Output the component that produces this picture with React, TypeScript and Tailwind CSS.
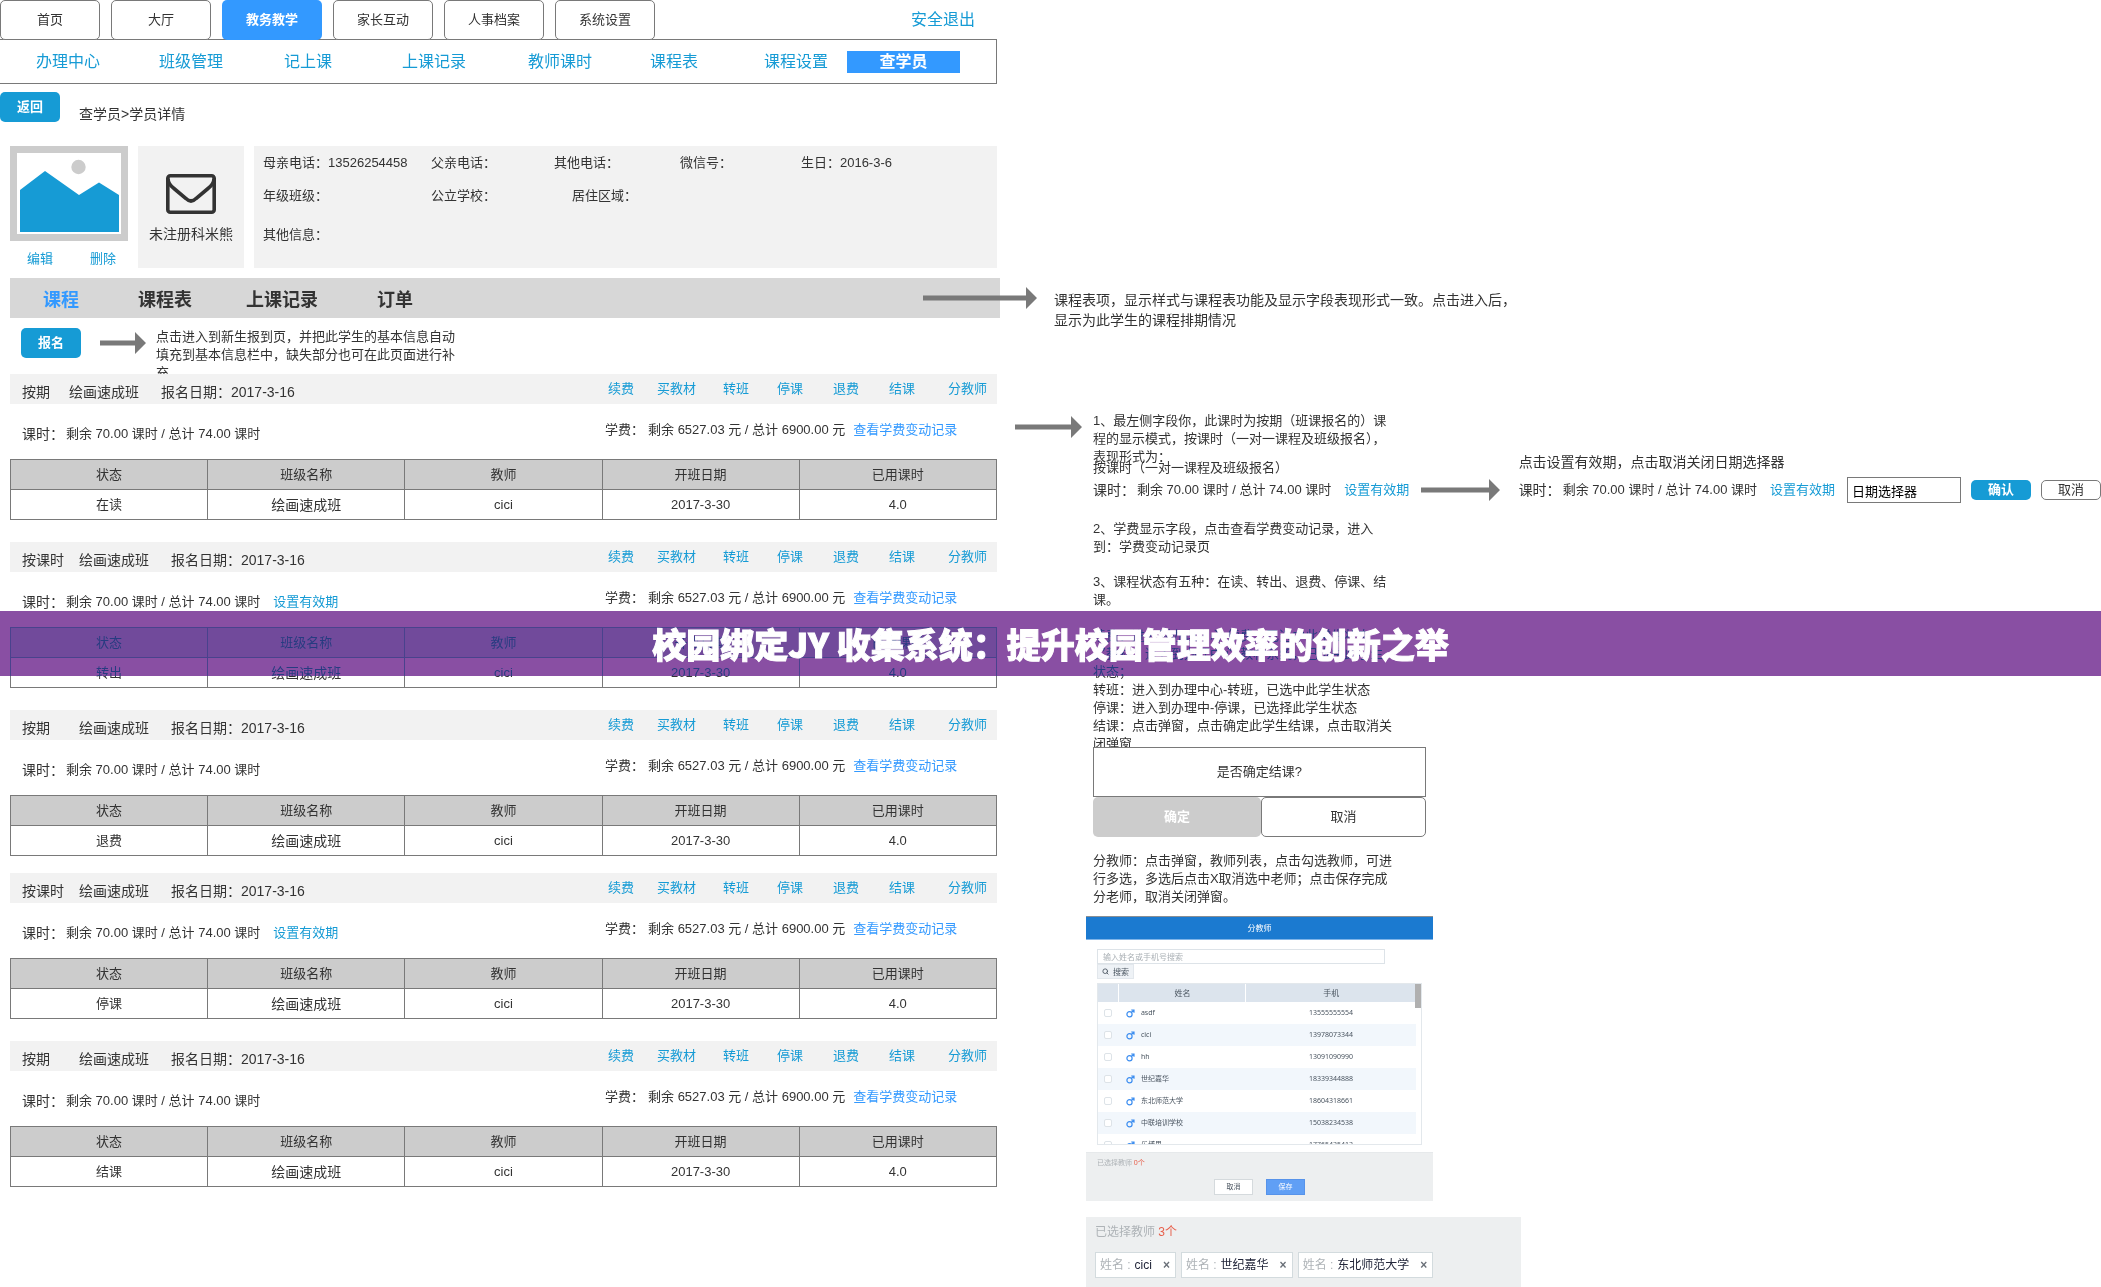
import { Search } from "lucide-react";

const topTabs = ["首页", "大厅", "教务教学", "家长互动", "人事档案", "系统设置"];
const subNav = ["办理中心", "班级管理", "记上课", "上课记录", "教师课时", "课程表", "课程设置"];
const actions = ["续费", "买教材", "转班", "停课", "退费", "结课", "分教师"];
const columns = ["状态", "班级名称", "教师", "开班日期", "已用课时"];

// courses are listed in two batches
const courseGroups = [
  [
    { id: 1, mode: "按期", status: "在读" },
    { id: 2, mode: "按课时", status: "转出" },
    { id: 3, mode: "按期", status: "退费" },
  ],
  [
    { id: 4, mode: "按课时", status: "停课" },
    { id: 5, mode: "按期", status: "结课" },
  ],
];

const teachers = [
  { name: "asdf", phone: "13555555554" },
  { name: "cici", phone: "13978073344" },
  { name: "hh", phone: "13091090990" },
  { name: "世纪嘉华", phone: "18339344888" },
  { name: "东北师范大学", phone: "18604318661" },
  { name: "中联培训学校", phone: "15038234538" },
  { name: "乐博思", phone: "17765435413" },
];

const picked = ["cici", "世纪嘉华", "东北师范大学"];

function Arrow({ length }: { length: number }) {
  return (
    <svg width={length} height="22" viewBox={`0 0 ${length} 22`} fill="#797979" className="block shrink-0" aria-hidden="true">
      <path d={`M0 8.5H${length - 11}V0L${length} 11L${length - 11} 22V13.5H0Z`} />
    </svg>
  );
}

function Avatar() {
  return (
    <svg viewBox="0 0 118 95" className="block w-full" aria-hidden="true">
      <rect width="118" height="95" fill="#cccccc" />
      <rect x="7" y="7" width="104" height="81" fill="#fff" />
      <circle cx="68.500" cy="21" r="7.200" fill="#cccccc" />
      <path d="M10 44L35 25L69 49L89 36.500L109 49V86H10Z" fill="#169bd5" />
    </svg>
  );
}

function Envelope() {
  return (
    <svg width="50" height="40" viewBox="0 0 50 40" fill="none" stroke="#333" strokeWidth="3.600" aria-hidden="true">
      <rect x="1.800" y="1.800" width="46.400" height="36.400" rx="2.500" />
      <path d="M2 4.500C2 9 4 11.500 8 14.500L20 24.500C23.500 28 26.500 28 30 24.500L42 14.500C46 11.500 48 9 48 4.500" />
    </svg>
  );
}

function MaleIcon() {
  return (
    <svg width="9" height="9" viewBox="0 0 9 9" fill="none" stroke="#3d8ef0" strokeWidth="1.200" aria-hidden="true">
      <circle cx="3.500" cy="5.300" r="2.600" />
      <path d="M5.400 3.400L7.800 1.200M5.200 1H8V3.800" />
    </svg>
  );
}

function Hours({ editable = false }: { editable?: boolean }) {
  return (
    <div className="flex items-center whitespace-nowrap">
      <span className="w-11 text-sm">课时：</span>
      <span>剩余 70.00 课时 / 总计 74.00 课时</span>
      {editable && (
        <a href="#" className="ml-[13px] text-[#169bd5]">
          设置有效期
        </a>
      )}
    </div>
  );
}

function Course({ id, mode, status }: { id: number; mode: string; status: string }) {
  return (
    <section>
      <div className="flex h-[30px] items-center bg-[#f2f2f2] pl-3">
        <div className="flex flex-1 pt-[6px] text-sm">
          <span className={id === 1 ? "w-[47px]" : "w-[57px]"}>{mode}</span>
          <span className="w-[92px]">绘画速成班</span>
          <span>报名日期：2017-3-16</span>
        </div>
        <nav className="grid w-[39.900%] grid-cols-[49fr_66fr_54fr_56fr_56fr_59fr_49fr] whitespace-nowrap text-[13px] text-[#169bd5]">
          {actions.map((action) => (
            <a key={action} href="#">
              {action}
            </a>
          ))}
        </nav>
      </div>
      <div className="flex h-[55px] items-center pl-3">
        <div className="flex-1 pt-1">
          <Hours editable={mode === "按课时"} />
        </div>
        <div className="flex w-[40.200%] whitespace-nowrap pb-1">
          <span className="w-[43px]">学费：</span>
          <span>剩余 6527.03 元 / 总计 6900.00 元</span>
          <a href="#" className="ml-2 text-[#3399ff]">
            查看学费变动记录
          </a>
        </div>
      </div>
      <table className="w-full table-fixed border-collapse text-center">
        <thead>
          <tr className="h-[30px] bg-[#ccc]">
            {columns.map((column) => (
              <th key={column} className="border border-[#797979] p-0 font-normal">
                {column}
              </th>
            ))}
          </tr>
        </thead>
        <tbody>
          <tr className="h-[30px]">
            <td className="border border-[#797979] p-0">{status}</td>
            <td className="border border-[#797979] p-0 text-sm">绘画速成班</td>
            <td className="border border-[#797979] p-0">cici</td>
            <td className="border border-[#797979] p-0">2017-3-30</td>
            <td className="border border-[#797979] p-0">4.0</td>
          </tr>
        </tbody>
      </table>
    </section>
  );
}

function TeacherPicker() {
  return (
    <div className="w-[347px] font-['Noto_Sans','Noto_Sans_CJK_SC',sans-serif] text-[8px] leading-[12px] text-[#4a5560]">
      <div className="h-6 border-y border-t-[#8a8f94] border-b-[#7fb4e8] bg-[#1b7ad0] text-center leading-[22px] text-white">分教师</div>
      <div className="bg-white px-[11px] pt-[9px] pb-[7px]">
        <input
          type="text"
          aria-label="搜索教师"
          placeholder="输入姓名或手机号搜索"
          className="block h-[15px] w-[288px] border border-[#dde3e8] px-[5px] placeholder:text-[#aab0b5]"
        />
        <button className="flex h-[15px] w-[37px] items-center justify-center gap-1 border border-[#e2e7ec] bg-[#eef2f6]">
          <Search size={7} strokeWidth={3} />
          搜索
        </button>
        <div className="relative mt-1 h-[162px] overflow-hidden border border-[#e3e8ec]">
          <table className="w-[318px] table-fixed border-collapse">
            <thead>
              <tr className="h-[18px] bg-[#dce4ed]">
                <th className="w-[21px] border-r border-white p-0"></th>
                <th className="w-[127px] border-r border-white p-0 font-normal">姓名</th>
                <th className="p-0 font-normal">手机</th>
              </tr>
            </thead>
            <tbody className="text-[7px]">
              {teachers.map((teacher) => (
                <tr key={teacher.name} className="h-[22px] even:bg-[#f2f7fc]">
                  <td className="p-0">
                    <input
                      type="checkbox"
                      aria-label={teacher.name}
                      className="mx-auto block size-2 appearance-none rounded-xs border border-[#dde3e8] bg-white"
                    />
                  </td>
                  <td className="p-0">
                    <div className="flex items-center gap-[6px] pl-[7px]">
                      <MaleIcon />
                      {teacher.name}
                    </div>
                  </td>
                  <td className="p-0 text-center">{teacher.phone}</td>
                </tr>
              ))}
            </tbody>
          </table>
          <div className="absolute top-0 right-0 h-6 w-[6px] bg-[#b0b0b0]" />
        </div>
      </div>
      <div className="h-[49px] border-t border-[#e6e9eb] bg-[#edeff0]">
        <p className="px-[11px] pt-1 text-[7px] text-[#aeb3b7]">
          已选择教师 <span className="text-[#e8604c]">0个</span>
        </p>
        <div className="mt-[10px] flex justify-center gap-[13px] text-[7px]">
          <button className="h-4 w-[39px] border border-[#d5dadd] bg-white">取消</button>
          <button className="h-4 w-[39px] border border-[#5793ea] bg-[#609ff5] text-white">保存</button>
        </div>
      </div>
    </div>
  );
}

function StudentPage() {
  return (
    <main className="w-[47.450%] shrink-0">
      <header className="flex items-center pr-[22px]">
        <nav className="flex flex-1 gap-[11px]">
          {topTabs.map((tab) => (
            <button
              key={tab}
              className={
                tab === "教务教学"
                  ? "h-10 w-[100px] rounded-[5px] bg-[#3399ff] font-bold text-white"
                  : "h-10 w-[100px] rounded-[5px] border border-[#797979] bg-white"
              }
            >
              {tab}
            </button>
          ))}
        </nav>
        <a href="#" className="text-base text-[#169bd5]">
          安全退出
        </a>
      </header>

      <nav className="-mt-px grid h-[45px] grid-cols-[123fr_125fr_118fr_126fr_122fr_114fr_83fr_113fr] items-center border border-l-0 border-[#797979] pr-9 pl-9 text-base whitespace-nowrap text-[#169bd5]">
        {subNav.map((item) => (
          <a key={item} href="#">
            {item}
          </a>
        ))}
        <a href="#" className="bg-[#3399ff] text-center leading-[22px] font-bold text-white">
          查学员
        </a>
      </nav>

      <div className="flex gap-[19px] pt-2">
        <button className="h-[30px] w-[60px] rounded-[5px] bg-[#169bd5] font-bold text-white">返回</button>
        <p className="pt-3 text-sm">查学员&gt;学员详情</p>
      </div>

      <div className="mt-[22px] flex gap-[10px] pl-[10px]">
        <div className="w-[118px]">
          <Avatar />
          <div className="flex justify-between pt-[9px] pr-3 pl-[17px] text-[#169bd5]">
            <a href="#">编辑</a>
            <a href="#">删除</a>
          </div>
        </div>
        <div className="flex h-[122px] w-[106px] flex-col items-center gap-[10px] bg-[#f2f2f2] pt-7 whitespace-nowrap">
          <Envelope />
          <p className="text-sm">未注册科米熊</p>
        </div>
        <div className="h-[122px] flex-1 bg-[#f2f2f2] px-[9px] pt-2 whitespace-nowrap">
          <div className="grid grid-cols-[168fr_123fr_126fr_121fr_187fr]">
            <span>母亲电话：13526254458</span>
            <span>父亲电话：</span>
            <span>其他电话：</span>
            <span>微信号：</span>
            <span>生日：2016-3-6</span>
          </div>
          <div className="mt-[15px] grid grid-cols-[168fr_141fr_416fr]">
            <span>年级班级：</span>
            <span>公立学校：</span>
            <span>居住区域：</span>
          </div>
          <p className="mt-[21px]">其他信息：</p>
        </div>
      </div>

      <div className="relative mt-[10px] -mr-[3px] ml-[10px] flex h-10 items-center bg-[#d7d7d7] pt-[3px] pl-[33px] text-lg font-bold">
        <a href="#" className="w-[95px] text-[#3399ff]">
          课程
        </a>
        <a href="#" className="w-[108px]">
          课程表
        </a>
        <a href="#" className="w-[131px]">
          上课记录
        </a>
        <a href="#">订单</a>
        <div className="absolute top-[9px] -right-[37px]">
          <Arrow length={114} />
        </div>
      </div>

      <div className="flex h-14 items-start overflow-hidden pt-[10px] pl-[21px]">
        <button className="h-[30px] w-[60px] rounded-[5px] bg-[#169bd5] font-bold text-white">报名</button>
        <div className="pt-1 pr-[10px] pl-[19px]">
          <Arrow length={46} />
        </div>
        <p className="w-[300px]">点击进入到新生报到页，并把此学生的基本信息自动填充到基本信息栏中，缺失部分也可在此页面进行补充</p>
      </div>

      <div className="flex flex-col gap-[17px] pl-[10px]">
        {courseGroups.map((group) => (
          <div key={group[0].id} className="flex flex-col gap-[22px]">
            {group.map((course) => (
              <Course key={course.id} {...course} />
            ))}
          </div>
        ))}
      </div>
    </main>
  );
}

function Notes() {
  return (
    <aside className="min-w-0 flex-1 pt-[290px]">
      <p className="ml-[57px] w-[470px] text-sm leading-5">
        课程表项，显示样式与课程表功能及显示字段表现形式一致。点击进入后，显示为此学生的课程排期情况
      </p>

      <div className="relative mt-[82px] pl-24">
        <div className="absolute top-1 left-[18px]">
          <Arrow length={67} />
        </div>
        <p className="w-[300px]">1、最左侧字段你，此课时为按期（班课报名的）课程的显示模式，按课时（一对一课程及班级报名），表现形式为：</p>

        <div className="-mt-[13px] flex items-end justify-between whitespace-nowrap">
          <div>
            <p>按课时（一对一课程及班级报名）</p>
            <div className="flex h-[26px] items-center gap-3">
              <Hours editable />
              <Arrow length={79} />
            </div>
          </div>
          <div>
            <p className="mb-[6px] text-sm leading-[18px]">点击设置有效期，点击取消关闭日期选择器</p>
            <div className="flex h-[26px] items-center">
              <Hours editable />
              <input
                type="text"
                aria-label="日期选择器"
                defaultValue="日期选择器"
                className="ml-3 h-[26px] w-[114px] border border-[#797979] px-1 text-black"
              />
              <button className="ml-[10px] h-5 w-[60px] rounded-[5px] bg-[#169bd5] font-bold text-white">确认</button>
              <button className="ml-[10px] h-5 w-[60px] rounded-[5px] border border-[#797979] bg-white">取消</button>
            </div>
          </div>
        </div>

        <div className="mt-[17px] w-[300px]">
          <p>2、学费显示字段，点击查看学费变动记录，进入到：学费变动记录页</p>
          <p className="mt-[17px]">3、课程状态有五种：在读、转出、退费、停课、结课。</p>
          <p className="mt-[18px]">续费：进入到办理中心-续费，已选中此学生状态</p>
          <p>买教材：进入到办理中心-教材系统，已选中此学生状态；</p>
          <p>转班：进入到办理中心-转班，已选中此学生状态</p>
          <p>停课：进入到办理中-停课，已选择此学生状态</p>
          <p>结课：点击弹窗，点击确定此学生结课，点击取消关闭弹窗</p>
        </div>

        <div className="relative -mt-[6px] w-[333px]">
          <p className="h-[50px] border border-[#797979] bg-white text-center leading-[48px]">是否确定结课?</p>
          <div className="flex">
            <button className="h-10 w-[168px] rounded-[5px] bg-[#ccc] font-bold text-white">确定</button>
            <button className="h-10 flex-1 rounded-[5px] border border-[#797979] bg-white">取消</button>
          </div>
        </div>

        <p className="mt-[15px] w-[306px]">
          分教师：点击弹窗，教师列表，点击勾选教师，可进行多选，多选后点击X取消选中老师；点击保存完成分老师，取消关闭弹窗。
        </p>
      </div>

      <div className="mt-[10px] ml-[89px]">
        <TeacherPicker />
        <div className="mt-4 h-[71px] w-[435px] bg-[#edeff0] px-[9px] pt-[6px] text-xs">
          <p className="leading-[18px] text-[#aeb3b7]">
            已选择教师 <span className="text-[#e8604c]">3个</span>
          </p>
          <div className="mt-[11px] flex gap-[5px]">
            {picked.map((name) => (
              <span key={name} className="flex h-[26px] items-center border border-[#d3dbde] bg-white px-1">
                <span className="mr-1 text-[#aeb3b7]">姓名 :</span>
                <span className="text-[#22263a]">{name}</span>
                <button aria-label={`移除${name}`} className="ml-[10px] w-[9px] font-bold text-[#6a7078]">
                  ×
                </button>
              </span>
            ))}
          </div>
        </div>
      </div>
    </aside>
  );
}

export default function App() {
  return (
    <div className="relative overflow-x-hidden bg-white font-['Liberation_Sans','Noto_Sans_CJK_SC',sans-serif] text-[13px] leading-[18px] text-[#333]">
      <div className="flex">
        <StudentPage />
        <Notes />
      </div>

      {/* translucent headline strip, tinted in two passes */}
      <div className="absolute inset-x-0 top-[611px] h-[65px] bg-[#f53357] mix-blend-multiply" />
      <div className="absolute inset-x-0 top-[611px] flex h-[65px] items-center justify-center bg-[#1e6cf0]/50">
        <h1 className="font-['Noto_Sans_CJK_SC',sans-serif] text-[34px] leading-none font-black whitespace-nowrap text-white [-webkit-text-stroke:1px_white]">
          校园绑定JY 收集系统：提升校园管理效率的创新之举
        </h1>
      </div>
    </div>
  );
}
